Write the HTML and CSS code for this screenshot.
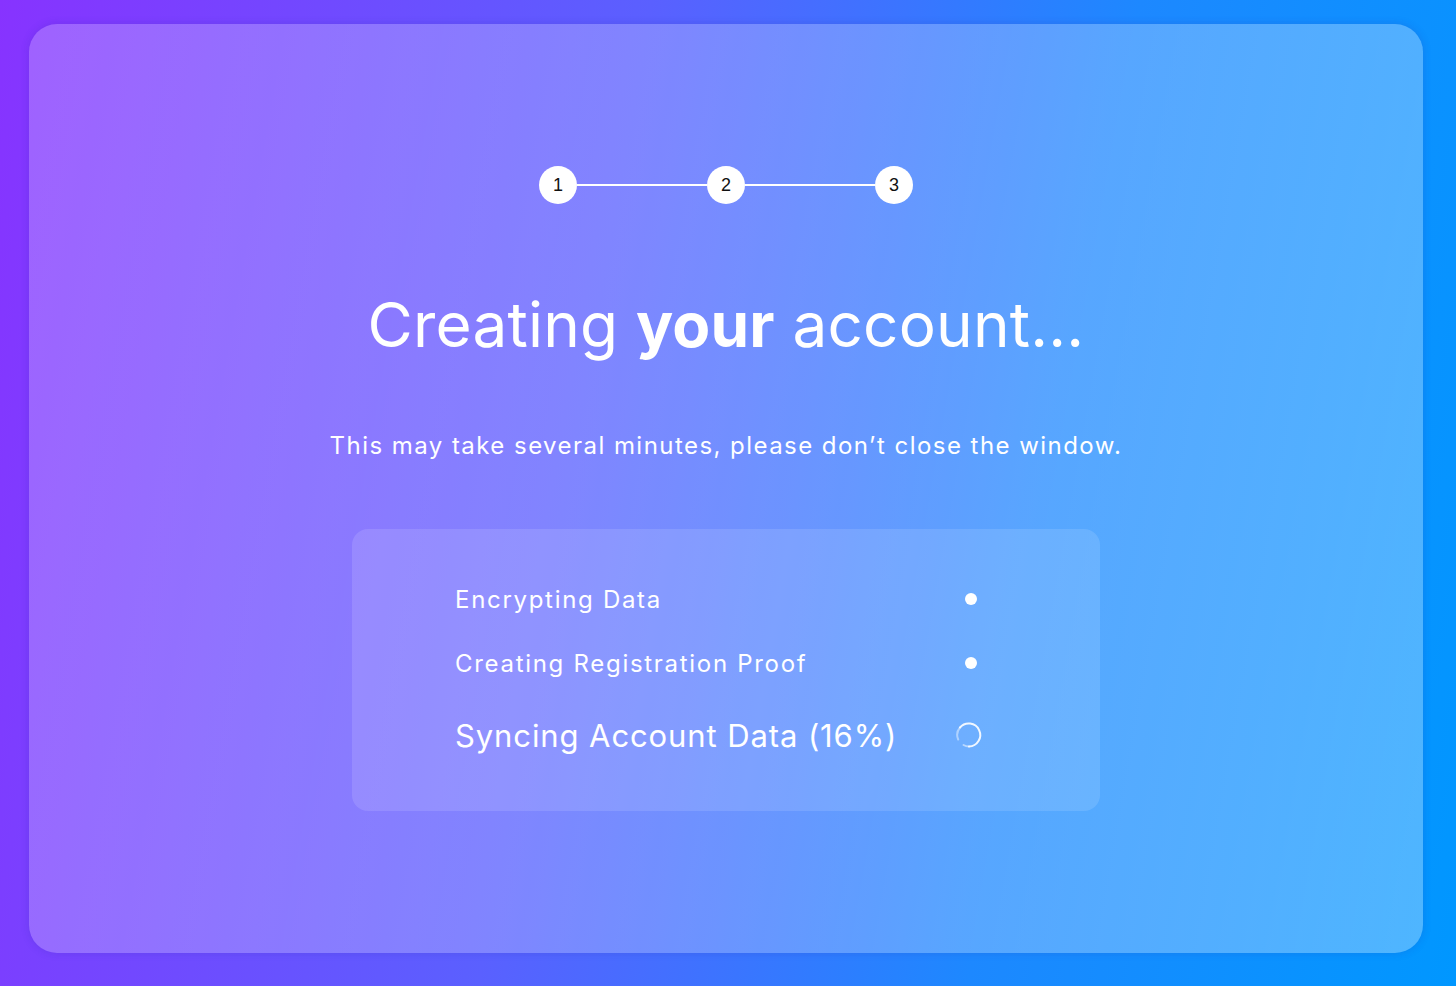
FILE: index.html
```html
<!DOCTYPE html>
<html>
<head>
<meta charset="utf-8">
<link rel="stylesheet" href="styles.css">
</head>
<body>
<div class="page">
  <main class="card">
    <div class="stepper">
      <span class="step">1</span>
      <span class="line"></span>
      <span class="step">2</span>
      <span class="line"></span>
      <span class="step">3</span>
    </div>
    <h1 class="title">Creating <b>your</b> account...</h1>
    <p class="subtitle">This may take several minutes, please don’t close the window.</p>
    <section class="tasks">
      <div class="task">
        <span class="task-label">Encrypting Data</span>
        <span class="dot"></span>
      </div>
      <div class="task">
        <span class="task-label">Creating Registration Proof</span>
        <span class="dot"></span>
      </div>
      <div class="task task-active">
        <span class="task-label">Syncing Account Data (16%)</span>
        <svg class="spinner" width="28" height="28" viewBox="0 0 28 28">
          <path d="M3.2 18.5 A11.5 11.5 0 0 1 5 6.5" fill="none" stroke="rgba(255,255,255,0.45)" stroke-width="2" stroke-linecap="round"/>
          <path d="M5 6.5 A11.5 11.5 0 1 1 14 25.5" fill="none" stroke="rgba(255,255,255,0.9)" stroke-width="2" stroke-linecap="round"/>
          <path d="M14 25.5 A11.5 11.5 0 0 1 8.5 24" fill="none" stroke="rgba(255,255,255,0.5)" stroke-width="2" stroke-linecap="round"/>
        </svg>
      </div>
    </section>
  </main>
</div>
</body>
</html>
```

FILE: styles.css
```css
html, body {
  margin: 0;
  padding: 0;
  height: 100%;
}
body {
  font-family: Inter, "Noto Sans", "Liberation Sans", sans-serif;
  background: linear-gradient(100deg, #8733ff 0%, #5a60ff 40%, #1d88ff 70%, #0097ff 100%);
  color: #fff;
}
.page {
  box-sizing: border-box;
  height: 986px;
  padding: 24px 33px 33px 29px;
  display: flex;
}
.card {
  flex: 1;
  border-radius: 28px;
  background: linear-gradient(100deg, rgba(255,255,255,0.22) 0%, rgba(255,255,255,0.24) 60%, rgba(255,255,255,0.30) 100%);
  box-shadow: 0 0 8px rgba(40, 40, 160, 0.18);
  display: flex;
  flex-direction: column;
  align-items: center;
  padding-top: 142px;
  box-sizing: border-box;
}
.stepper {
  display: flex;
  align-items: center;
}
.step {
  width: 38px;
  height: 38px;
  border-radius: 50%;
  background: #fff;
  color: #111;
  font-family: "Liberation Sans", Arial, sans-serif;
  font-size: 18px;
  display: flex;
  align-items: center;
  justify-content: center;
}
.line {
  width: 130px;
  height: 2px;
  background: #fff;
}
.title {
  margin: 83px 0 0;
  font-size: 62px;
  font-weight: 400;
  line-height: 76px;
  letter-spacing: 0.2px;
}
.title b {
  font-weight: 700;
}
.subtitle {
  margin: 68px 0 0;
  font-size: 24px;
  line-height: 30px;
  letter-spacing: 1.45px;
}
.tasks {
  margin-top: 68px;
  width: 748px;
  height: 282px;
  box-sizing: border-box;
  border-radius: 16px;
  background: rgba(255,255,255,0.12);
  padding: 50px 116px 0 103px;
  display: flex;
  flex-direction: column;
}
.task {
  display: flex;
  justify-content: space-between;
  align-items: center;
  height: 40px;
  margin-bottom: 24px;
}
.task-label {
  font-size: 24px;
  letter-spacing: 1.7px;
}
.task-active {
  margin-top: 8px;
}
.task-active .task-label {
  font-size: 31px;
  letter-spacing: 0.9px;
}
.dot {
  width: 12px;
  height: 12px;
  border-radius: 50%;
  background: #fff;
  margin-right: 7px;
}
.spinner {
  margin-right: 1px;
}
```
